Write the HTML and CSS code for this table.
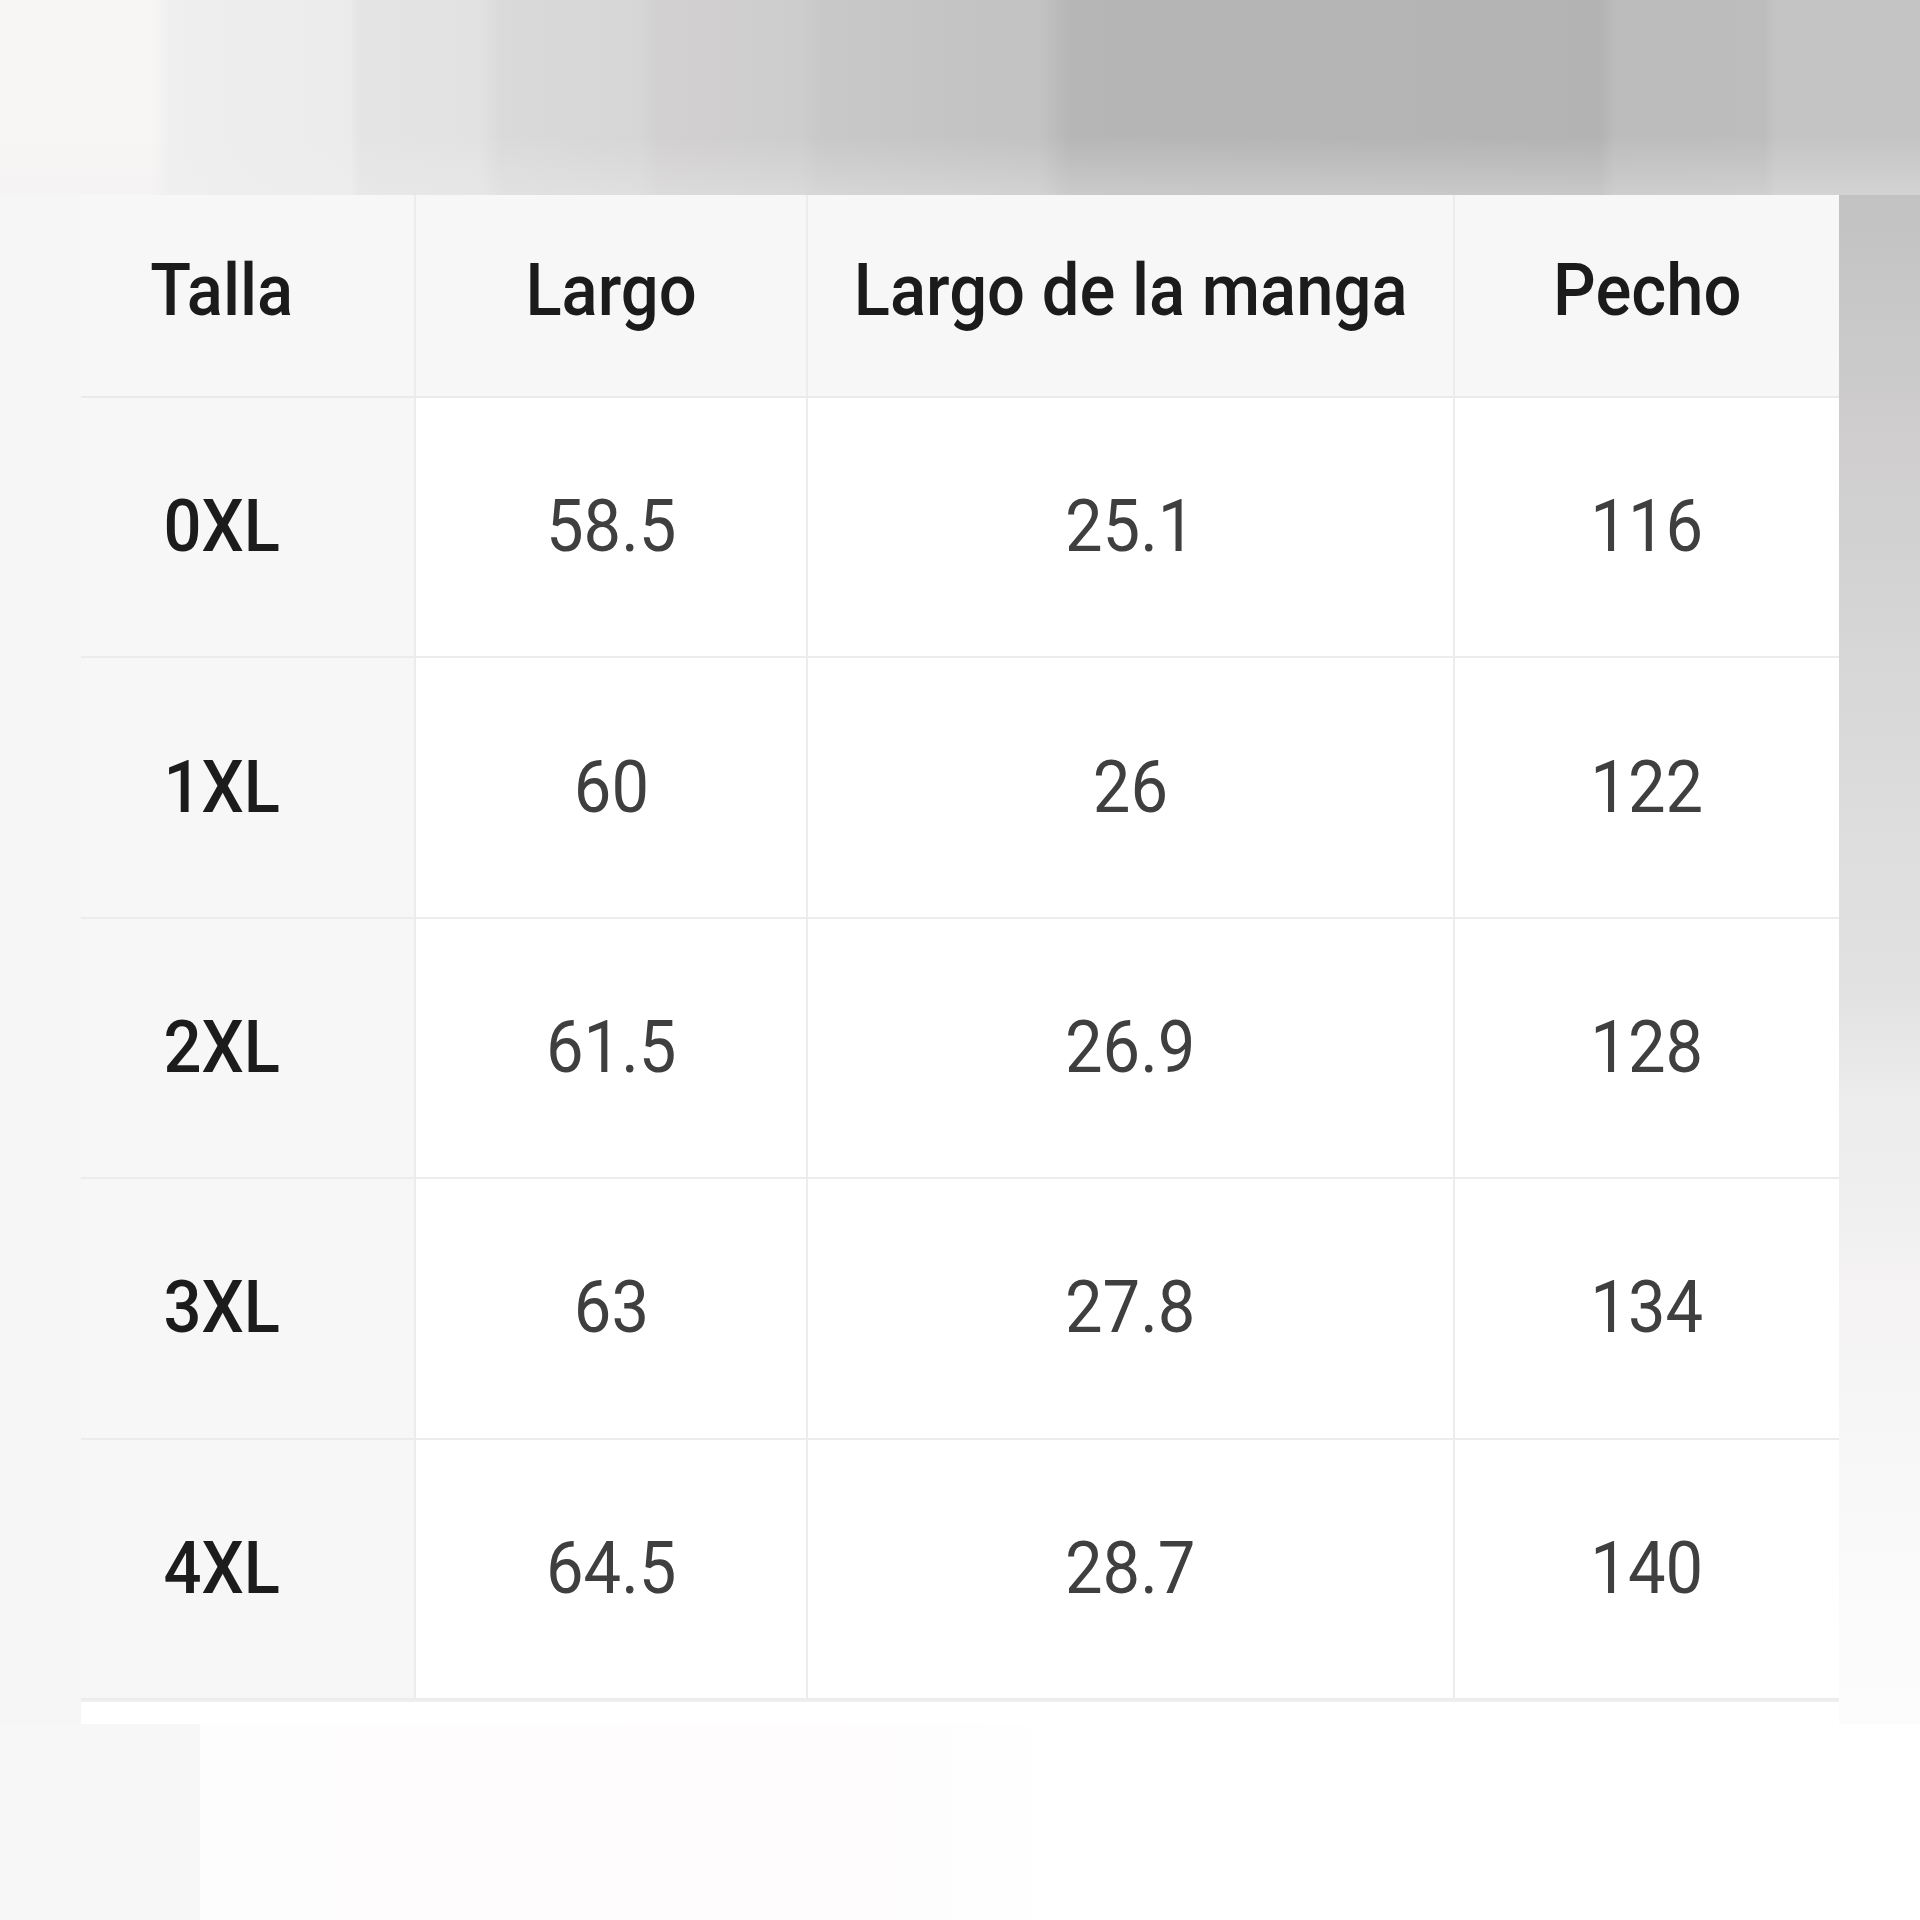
FILE: index.html
```html
<!DOCTYPE html>
<html lang="es">
<head>
<meta charset="utf-8">
<title>Tabla de tallas</title>
<link rel="stylesheet" href="styles.css">
</head>
<body>
<div class="page">
  <div class="top-band"></div>
  <div class="middle">
    <div class="left-gap"></div>
    <div class="size-table">
      <div class="cell head first"><span class="txt">Talla</span></div>
      <div class="cell head"><span class="txt">Largo</span></div>
      <div class="cell head"><span class="txt">Largo de la manga</span></div>
      <div class="cell head last"><span class="txt">Pecho</span></div>

      <div class="cell size first"><span class="txt">0XL</span></div>
      <div class="cell num"><span class="txt">58.5</span></div>
      <div class="cell num"><span class="txt">25.1</span></div>
      <div class="cell num last"><span class="txt">116</span></div>

      <div class="cell size first"><span class="txt">1XL</span></div>
      <div class="cell num"><span class="txt">60</span></div>
      <div class="cell num"><span class="txt">26</span></div>
      <div class="cell num last"><span class="txt">122</span></div>

      <div class="cell size first"><span class="txt">2XL</span></div>
      <div class="cell num"><span class="txt">61.5</span></div>
      <div class="cell num"><span class="txt">26.9</span></div>
      <div class="cell num last"><span class="txt">128</span></div>

      <div class="cell size first"><span class="txt">3XL</span></div>
      <div class="cell num"><span class="txt">63</span></div>
      <div class="cell num"><span class="txt">27.8</span></div>
      <div class="cell num last"><span class="txt">134</span></div>

      <div class="cell size first"><span class="txt">4XL</span></div>
      <div class="cell num"><span class="txt">64.5</span></div>
      <div class="cell num"><span class="txt">28.7</span></div>
      <div class="cell num last"><span class="txt">140</span></div>
    </div>
    <div class="right-gap"></div>
  </div>
  <div class="under-strip">
    <div class="us-left"></div>
    <div class="us-mid"></div>
    <div class="us-right"></div>
  </div>
  <div class="bottom">
    <div class="b-left"></div>
    <div class="b-rest"></div>
  </div>
</div>
</body>
</html>
```
FILE: styles.css
```css
html, body {
  margin: 0;
  padding: 0;
}
body {
  background: #fbfafa;
  font-family: Roboto, "Noto Sans", "Liberation Sans", sans-serif;
}
.page {
  width: 1920px;
  height: 1920px;
  display: flex;
  flex-direction: column;
  overflow: hidden;
}
.top-band {
  height: 195px;
  flex: none;
  background:
    linear-gradient(to bottom, rgba(255,255,255,0) 70%, rgba(240,240,240,0.35) 100%),
    linear-gradient(to right,
      #f8f5f5 0px, #f8f5f5 150px,
      #f0efef 170px, #ebebeb 350px,
      #e4e4e4 360px, #e2e2e2 480px,
      #dadada 500px, #d6d6d6 640px,
      #d2d0d0 660px, #cecdcd 800px,
      #c8c8c8 820px, #c2c2c2 1040px,
      #b6b6b6 1070px, #b3b3b3 1600px,
      #bcbcbc 1615px, #bdbdbd 1765px,
      #c4c4c4 1775px, #c4c4c4 1920px);
}
.middle {
  display: flex;
  flex: none;
  height: 1505px;
}
.left-gap {
  width: 81px;
  flex: none;
  background: #f7f6f6;
}
.right-gap {
  width: 81px;
  flex: none;
  background: linear-gradient(to bottom,
    #c2c2c2 0px, #c8c8c8 120px, #cfcdcd 230px, #d4d4d4 400px,
    #dcdcdc 600px, #e2e2e2 800px, #ececec 900px, #efefef 1000px,
    #f5f3f3 1100px, #f7f7f7 1250px, #fbfafa 1400px, #fdfcfc 1505px);
}
.size-table {
  width: 1758px;
  flex: none;
  display: grid;
  grid-template-columns: 335px 392px 647px 384px;
  grid-template-rows: 203px repeat(5, 260.4px);
  background: #ffffff;
}
.cell {
  display: flex;
  align-items: center;
  justify-content: center;
  border-right: 2px solid #ececec;
  border-bottom: 2px solid #ececec;
  background: #ffffff;
}
.cell.last {
  border-right: none;
}
.cell.head {
  background: #f7f7f7;
  color: #1b1b1b;
  font-weight: 500;
  font-size: 72px;
  padding-bottom: 10px;
  border-bottom-color: #eaeaea;
}
.cell.first {
  background: #f7f7f7;
  padding-right: 52px;
}
.cell.size {
  color: #1c1c1c;
  font-weight: 500;
  font-size: 72px;
}
.cell.num {
  color: #3f3f3f;
  font-weight: 400;
  font-size: 72px;
}
.txt {
  display: inline-block;
  transform: scaleX(0.93);
  white-space: nowrap;
  line-height: 1;
}
.under-strip {
  height: 24px;
  flex: none;
  display: flex;
}
.us-left {
  width: 81px;
  background: #f7f6f6;
}
.us-mid {
  width: 1758px;
  background: #ffffff;
  border-top: 2px solid #efefef;
}
.us-right {
  flex: 1;
  background: #fdfcfc;
}
.bottom {
  flex: 1;
  display: flex;
}
.b-left {
  width: 200px;
  background: #f7f7f7;
}
.b-rest {
  flex: 1;
  background: linear-gradient(to right, #fefdfd 0px, #fefcfc 620px, #ffffff 880px, #ffffff 100%);
}
```
